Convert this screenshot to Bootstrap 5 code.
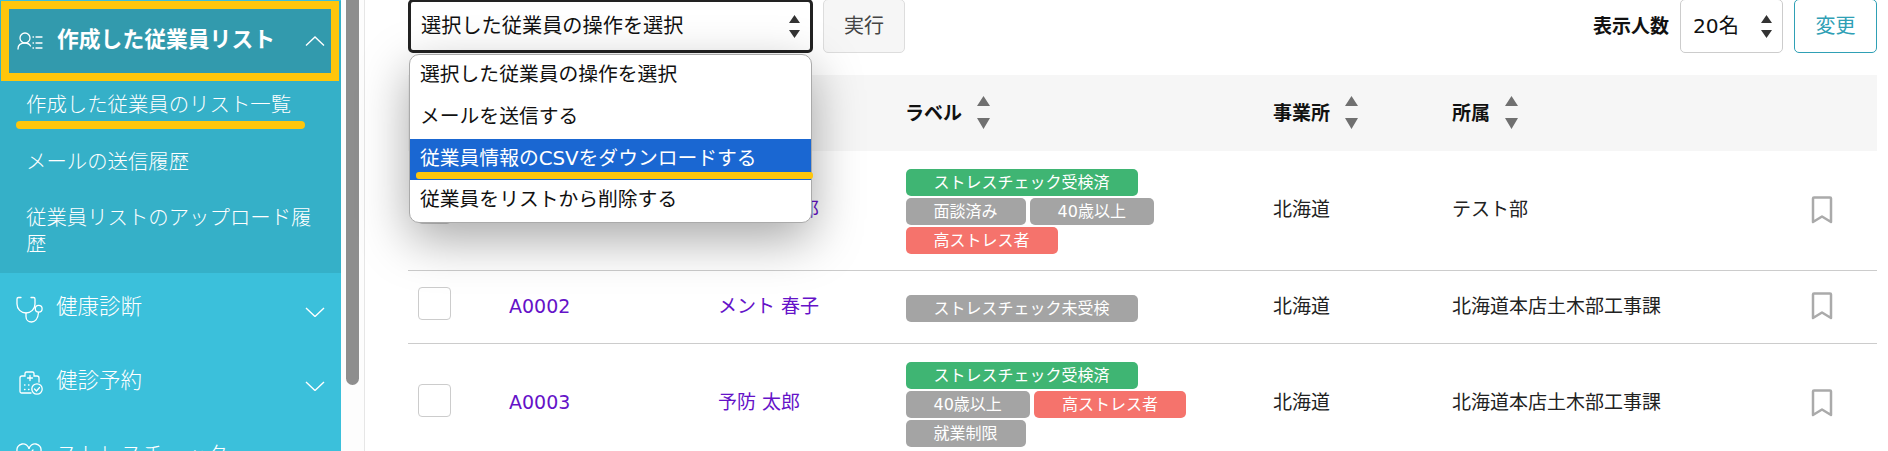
<!DOCTYPE html>
<html lang="ja">
<head>
  <meta charset="UTF-8">
  <meta name="viewport" content="width=device-width, initial-scale=1.0">
  <title>作成した従業員リスト</title>
  <link href="https://cdn.jsdelivr.net/npm/bootstrap@5.3.0/dist/css/bootstrap.min.css" rel="stylesheet">
  <style>
    html, body { height: 451px; overflow: hidden; }
    body {
      font-family: "DejaVu Sans", "Noto Sans CJK JP", sans-serif;
      color: #222;
      background: #fff;
    }
    .side-nav { width: 341px; height: 451px; background: #3bc0db; color: #fff; flex: none; overflow: hidden; }
    .side-open { background: #35b0c8; height: 272px; }
    .side-head {
      height: 80px;
      margin: 1px 2px 0 1px;
      padding: 0 6px 0 8px;
      background: #329aad;
      border: 8px solid #ffc60b;
      font-size: 21.8px;
      font-weight: 700;
    }
    .side-head > span { margin-bottom: 1px; }
    .side-icon { width: 26px; height: 26px; margin-right: 14px; flex: none; overflow: visible; }
    .side-chev { width: 20px; height: 10px; flex: none; }
    .side-sub { padding: 12px 20px 0 26px; font-size: 20.4px; line-height: 25.5px; font-weight: 300; }
    .side-sub div { position: relative; margin-bottom: 31px; }
    .side-mark {
      position: absolute; left: -10px; top: 28px;
      width: 289px; height: 8px; border-radius: 4px; background: #ffc60b;
    }
    .side-row { height: 74px; padding: 0 16px 6px 16px; font-size: 21.5px; font-weight: 300; }
    .side-row .side-chev { margin-top: 10px; }
    .scroll-col { width: 24px; flex: none; border-right: 1px solid #e6e6e6; background: #fdfdfd; }
    .scroll-thumb { width: 13px; height: 385px; margin-left: 5px; background: #8e8e8e; border-radius: 0 0 7px 7px; }
    .main-area { flex: 1 1 auto; min-width: 0; padding: 0 11px 0 43px; position: relative; }
    .tool-bar { height: 54px; margin-top: -1px; margin-bottom: 22px; }
    .act-select, .num-select {
      height: 54px;
      color: #111;
      font-size: 20.2px;
      line-height: 30px;
      border-radius: 5px;
      background-image: url("data:image/svg+xml,%3csvg xmlns='http://www.w3.org/2000/svg' width='11' height='23'%3e%3cpath fill='%23333' d='M5.500 0 11 8H0zM0 15h11l-5.500 8z'/%3e%3c/svg%3e");
      background-size: 11px 23px;
      background-position: right 10px center;
    }
    .act-select { width: 405px; padding: 0 30px 0 10px; border: 3px solid #222; }
    .num-select { width: 103px; padding: 0 20px 0 12px; border: 1px solid #ccc; margin: 0 11px; }
    .run-btn, .change-btn { height: 54px; width: 82px; font-size: 20px; line-height: 1; border-radius: 5px; padding: 0; }
    .run-btn { margin-left: 10px; background: #f6f6f6; border: 1px solid #ddd; color: #444; }
    .change-btn { width: 83px; background: #fff; border: 1px solid #2fa0b5; color: #2fa0b5; }
    .count-label { font-size: 19px; font-weight: 700; color: #111; }
    .staff-table { table-layout: fixed; width: 1469px; margin: 0; font-size: 19px; }
    .staff-table th {
      height: 76px; background: #f6f6f6; border: 0; padding: 0 10px;
      font-weight: 700; vertical-align: middle; color: #111;
    }
    .staff-table td {
      height: 73px; padding: 14px 10px 16px; vertical-align: middle;
      border-bottom: 1px solid #ccc; line-height: 27px; color: #222;
    }
    .staff-table td.tag-cell { padding: 18px 10px 16px 10.500px; }
    .c-a { width: 91px; } .c-b { width: 209px; } .c-c { width: 187px; }
    .c-d { width: 368px; } .c-e { width: 179px; } .c-f { width: 358px; } .c-g { width: 77px; }
    .sort-head { display: flex; align-items: center; gap: 15px; }
    .sort-mark { width: 13px; height: 33px; margin-bottom: 2px; flex: none; }
    .tick-box { display: block; width: 33px; height: 33px; margin-bottom: 5px; border: 1px solid #ccc; border-radius: 4px; background: #fff; }
    .staff-link { color: #6512c8; text-decoration: none; }
    .tag-wrap { display: flex; flex-wrap: wrap; gap: 2px 4px; width: 345px; }
    .tag-item { height: 27px; padding: 0 28px; border-radius: 5px; color: #fff; font-size: 16px; line-height: 27px; white-space: nowrap; }
    .tag-green { background: #3fb573; }
    .tag-gray { background: #a4a4a4; }
    .tag-red { background: #f5736c; }
    .mark-icon { display: block; width: 24px; height: 30px; }
    .act-menu {
      position: absolute; left: 44px; top: 54px; width: 403px; height: 169px;
      padding: 0; background: #fff; border: 1px solid #aaa; border-radius: 10px; overflow: visible;
      box-shadow: 0 16px 50px rgba(0, 0, 0, .35);
      font-size: 19.8px; line-height: 30px; color: #111;
    }
    .act-item { height: 42px; padding: 5px 10px; position: relative; }
    .act-item.is-hot { background: #1a67d2; color: #fff; height: 41px; }
    .act-mark {
      position: absolute; left: 6px; right: -2px; top: 33px;
      height: 7px; border-radius: 3px; background: #ffc60b;
    }
  </style>
</head>
<body>
  <div class="d-flex">
    <nav class="side-nav">
      <div class="side-open">
        <div class="side-head d-flex align-items-center">
          <svg class="side-icon" viewBox="17 28 26 26" fill="none" stroke="#fff" stroke-width="1.3" stroke-linecap="round">
            <circle cx="25" cy="38" r="5"/>
            <path d="M18 49c0-4 3-6 7-6 2.500 0 4.500 1 5.500 3M33 37h.5M36 37h6M33 43h.5M36 43h6M33 48h.5M36 48h6"/>
          </svg>
          <span class="flex-grow-1">作成した従業員リスト</span>
          <svg class="side-chev" viewBox="0 0 20 10" fill="none" stroke="#fff" stroke-width="1.4"><path d="M1 9.500 10 1l9 8.500"/></svg>
        </div>
        <div class="side-sub">
          <div>作成した従業員のリスト一覧<span class="side-mark"></span></div>
          <div>メールの送信履歴</div>
          <div>従業員リストのアップロード履歴</div>
        </div>
      </div>
      <div class="side-row d-flex align-items-center">
        <svg class="side-icon" viewBox="16 293 26 26" fill="none" stroke="#fff" stroke-width="1.3" stroke-linecap="round">
          <path d="M21 296.500h-2.500a1.500 1.500 0 0 0-1.500 1.500v5c0 5 4 9 9 9s9-4 9-9v-5a1.500 1.500 0 0 0-1.500-1.500H31"/>
          <path d="M26 312v3.500c0 3.500 2.500 5.500 5.500 5.500s6.500-2.500 7-9.500"/>
          <circle cx="38.700" cy="307.800" r="3.400"/>
        </svg>
        <span class="flex-grow-1">健康診断</span>
        <svg class="side-chev" viewBox="0 0 20 10" fill="none" stroke="#fff" stroke-width="1.4"><path d="M1 1l9 8.500L19 1"/></svg>
      </div>
      <div class="side-row d-flex align-items-center">
        <svg class="side-icon" viewBox="16 367 26 26" fill="none" stroke="#fff" stroke-width="1.3" stroke-linecap="round">
          <path d="M31 392h-9.500a1.500 1.500 0 0 1-1.500-1.500V377a2 2 0 0 1 2-2h3v-2.500a1.500 1.500 0 0 1 1.500-1.500h6a1.500 1.500 0 0 1 1.500 1.500v2.500h3a2 2 0 0 1 2 2v4"/>
          <path d="M30 374.500v5M27.500 377h5M24.500 384h.5M24.500 388.500h.5M28.500 384h.5M28.500 388.500h.5"/>
          <circle cx="37" cy="388" r="5.200"/>
          <path d="m34.500 388 2 2 3-3.500"/>
        </svg>
        <span class="flex-grow-1">健診予約</span>
        <svg class="side-chev" viewBox="0 0 20 10" fill="none" stroke="#fff" stroke-width="1.4"><path d="M1 1l9 8.500L19 1"/></svg>
      </div>
      <div class="side-row d-flex align-items-center">
        <svg class="side-icon" viewBox="0 0 26 26" fill="none" stroke="#fff" stroke-width="1.3" stroke-linecap="round">
          <path d="M13 24C6 19 1 14.500 1 9a6 6 0 0 1 12-2 6 6 0 0 1 12 2c0 5.500-5 10-12 15z"/>
          <path d="m9 11 3 3 5-6"/>
        </svg>
        <span class="flex-grow-1">ストレスチェック</span>
      </div>
    </nav>
    <div class="scroll-col"><div class="scroll-thumb"></div></div>

    <main class="main-area">
      <div class="tool-bar d-flex align-items-start">
        <select class="form-select act-select"><option>選択した従業員の操作を選択</option></select>
        <button type="button" class="btn run-btn">実行</button>
        <div class="ms-auto d-flex align-items-center">
          <span class="count-label">表示人数</span>
          <select class="form-select num-select"><option>20名</option></select>
          <button type="button" class="btn change-btn">変更</button>
        </div>
      </div>

      <table class="table staff-table">
        <colgroup>
          <col class="c-a"><col class="c-b"><col class="c-c"><col class="c-d"><col class="c-e"><col class="c-f"><col class="c-g">
        </colgroup>
        <thead>
          <tr>
            <th></th>
            <th>従業員番号</th>
            <th>氏名</th>
            <th>
              <div class="sort-head">ラベル
                <svg class="sort-mark" viewBox="0 0 13 33" fill="#707070"><path d="M6.500 0 13 10H0zM0 22h13l-6.500 11z"/></svg>
              </div>
            </th>
            <th>
              <div class="sort-head">事業所
                <svg class="sort-mark" viewBox="0 0 13 33" fill="#707070"><path d="M6.500 0 13 10H0zM0 22h13l-6.500 11z"/></svg>
              </div>
            </th>
            <th>
              <div class="sort-head">所属
                <svg class="sort-mark" viewBox="0 0 13 33" fill="#707070"><path d="M6.500 0 13 10H0zM0 22h13l-6.500 11z"/></svg>
              </div>
            </th>
            <th></th>
          </tr>
        </thead>
        <tbody>
          <tr>
            <td><span class="tick-box"></span></td>
            <td><a class="staff-link" href="#">A0001</a></td>
            <td><a class="staff-link" href="#">テスト 太郎</a></td>
            <td class="tag-cell">
              <div class="tag-wrap">
                <span class="tag-item tag-green">ストレスチェック受検済</span>
                <span class="tag-item tag-gray">面談済み</span>
                <span class="tag-item tag-gray">40歳以上</span>
                <span class="tag-item tag-red">高ストレス者</span>
              </div>
            </td>
            <td>北海道</td>
            <td>テスト部</td>
            <td><svg class="mark-icon" viewBox="0 0 24 30" fill="none" stroke="#aaa" stroke-width="2.500" stroke-linejoin="round"><path d="M4 2.500h16a1 1 0 0 1 1 1V27l-9-5.500L3 27V3.500a1 1 0 0 1 1-1z"/></svg></td>
          </tr>
          <tr>
            <td><span class="tick-box"></span></td>
            <td><a class="staff-link" href="#">A0002</a></td>
            <td><a class="staff-link" href="#">メント 春子</a></td>
            <td class="tag-cell">
              <div class="tag-wrap">
                <span class="tag-item tag-gray">ストレスチェック未受検</span>
              </div>
            </td>
            <td>北海道</td>
            <td>北海道本店土木部工事課</td>
            <td><svg class="mark-icon" viewBox="0 0 24 30" fill="none" stroke="#aaa" stroke-width="2.500" stroke-linejoin="round"><path d="M4 2.500h16a1 1 0 0 1 1 1V27l-9-5.500L3 27V3.500a1 1 0 0 1 1-1z"/></svg></td>
          </tr>
          <tr>
            <td><span class="tick-box"></span></td>
            <td><a class="staff-link" href="#">A0003</a></td>
            <td><a class="staff-link" href="#">予防 太郎</a></td>
            <td class="tag-cell">
              <div class="tag-wrap">
                <span class="tag-item tag-green">ストレスチェック受検済</span>
                <span class="tag-item tag-gray">40歳以上</span>
                <span class="tag-item tag-red">高ストレス者</span>
                <span class="tag-item tag-gray">就業制限</span>
              </div>
            </td>
            <td>北海道</td>
            <td>北海道本店土木部工事課</td>
            <td><svg class="mark-icon" viewBox="0 0 24 30" fill="none" stroke="#aaa" stroke-width="2.500" stroke-linejoin="round"><path d="M4 2.500h16a1 1 0 0 1 1 1V27l-9-5.500L3 27V3.500a1 1 0 0 1 1-1z"/></svg></td>
          </tr>
        </tbody>
      </table>

      <div class="act-menu">
        <div class="act-item">選択した従業員の操作を選択</div>
        <div class="act-item">メールを送信する</div>
        <div class="act-item is-hot">従業員情報のCSVをダウンロードする<span class="act-mark"></span></div>
        <div class="act-item">従業員をリストから削除する</div>
      </div>
    </main>
  </div>
  <script src="https://cdn.jsdelivr.net/npm/bootstrap@5.3.0/dist/js/bootstrap.bundle.min.js"></script>
</body>
</html>
